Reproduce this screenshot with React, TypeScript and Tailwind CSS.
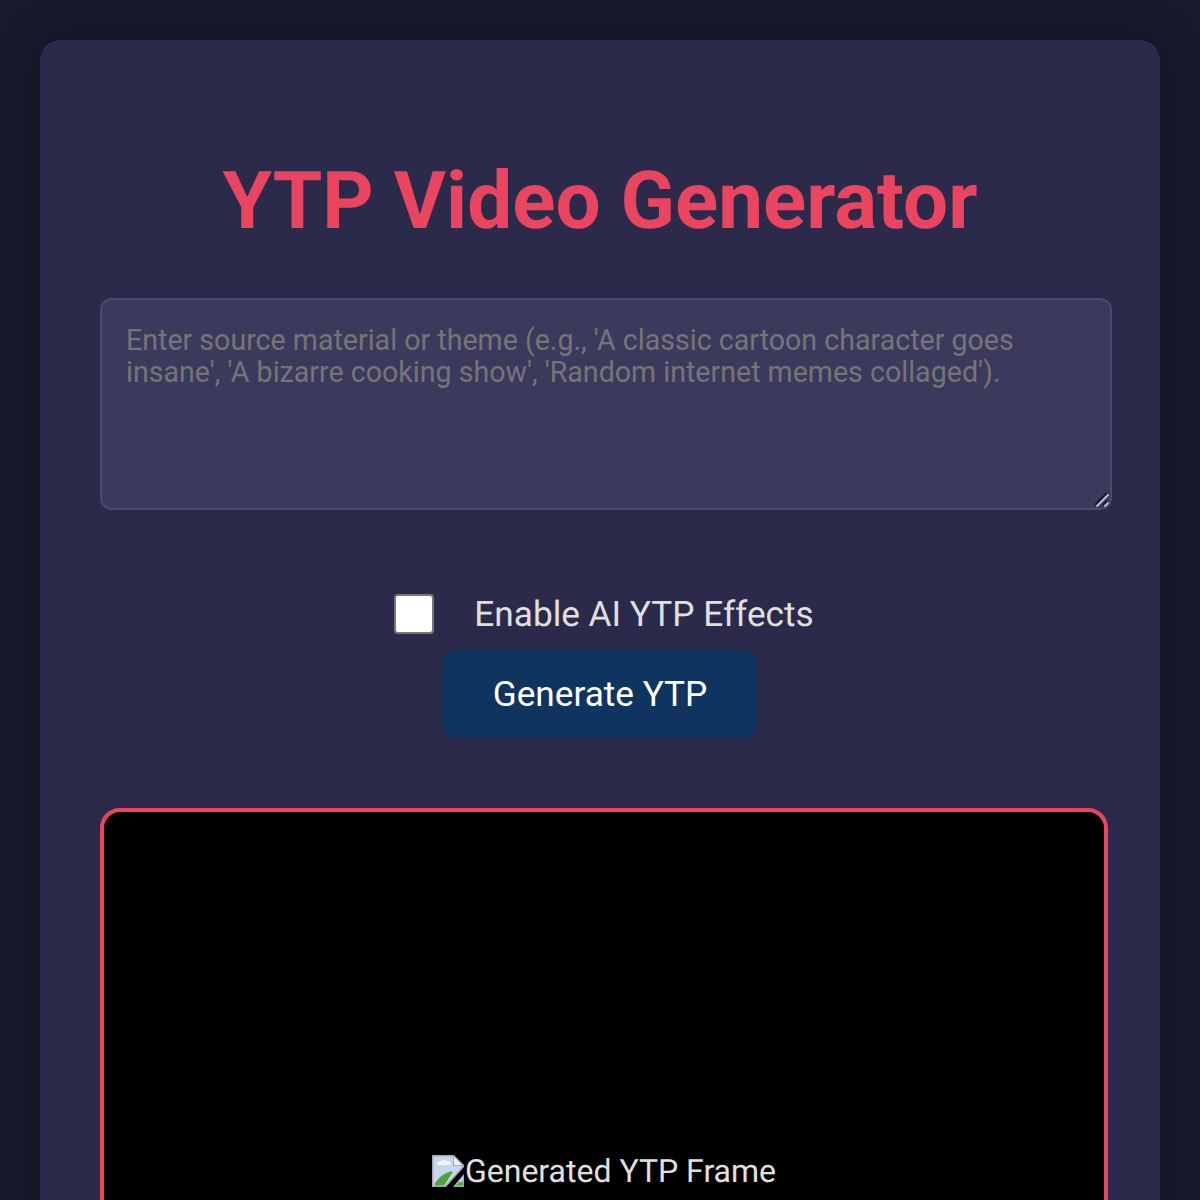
import React from 'react';

// Stand-in for the browser's broken image glyph
const BrokenImageIcon = () => (
    <svg width="33" height="32" viewBox="0 0 33 32" className="shrink-0">
        <path d="M0 0H22L32 10V12L14 32H0Z" fill="#a9a9a9" />
        <path d="M1.5 1.5H21V11H30.5V11.5L13 30.5H1.5Z" fill="#c5d6f3" />
        <path d="M22 2L30 10H22Z" fill="#f1f1f1" />
        <path d="M5 9Q6 6 9 6Q12 3 15 6Q19 6 19 9Q19 10 17 10H6Q5 10 5 9Z" fill="#f4f6fb" />
        <path d="M3 30.5V28Q8 20 17 17Q19 16 21 17L12 30.5Z" fill="#4fa636" />
        <path d="M32 19V32H21Z" fill="#a9a9a9" />
        <path d="M31 21V30.5H23Z" fill="#bccfe9" />
        <path d="M25 29Q28 26 31 27V30.5H23Z" fill="#54a83c" />
    </svg>
);

// Textarea resize grip, drawn large like the reference
const ResizeGrip = () => (
    <svg width="16" height="16" viewBox="0 0 16 16" className="pointer-events-none absolute right-[1px] bottom-[1px]">
        <path d="M0 12L12 0" stroke="#15152a" strokeWidth="2" />
        <path d="M8 12L12 8" stroke="#15152a" strokeWidth="2" />
        <path d="M1.5 13.5L13.5 1.5" stroke="#c0c0d0" strokeWidth="2" />
        <path d="M9.5 13.5L13.5 9.5" stroke="#c0c0d0" strokeWidth="2" />
    </svg>
);

export default function App() {
    return (
        <div className="h-[1200px] overflow-hidden bg-[#1a1a2e] p-10 font-['Roboto',sans-serif] [text-rendering:geometricPrecision]">
            <div className="rounded-[20px] bg-[#2b2a4a] px-[60px] pt-[60px] shadow-[0_0_40px_rgba(0,0,0,0.4)]">
                <h1 className="mt-[53px] mb-[49px] text-center text-[80px] leading-[96px] font-bold text-[#e94560]">
                    YTP Video Generator
                </h1>

                <div className="relative w-[1012px]">
                    <textarea
                        className="block h-[212px] w-full resize-none rounded-xl border-2 border-[#4a4a6a] bg-[#3c3a5c] px-6 py-6 text-[28.6px] leading-[32px] text-white placeholder:text-[#757575] outline-none"
                        placeholder="Enter source material or theme (e.g., 'A classic cartoon character goes insane', 'A bizarre cooking show', 'Random internet memes collaged')."
                    />
                    <ResizeGrip />
                </div>

                <div className="mt-[84px] flex items-center justify-center pl-[8px]">
                    <input
                        type="checkbox"
                        className="h-10 w-10 appearance-none rounded-[4px] border-2 border-[#767676] bg-white"
                    />
                    <label className="ml-[40px] text-[35.2px] leading-[40px] text-[#e0e0e0]">Enable AI YTP Effects</label>
                </div>

                <div className="mt-4 flex justify-center">
                    <button className="h-[88px] w-[316px] rounded-[16px] bg-[#0f3460] text-[35.2px] text-white">
                        Generate YTP
                    </button>
                </div>

                <div className="mt-[70px] flex h-[726px] w-[1008px] items-center justify-center rounded-[20px] border-4 border-[#e94560] bg-black">
                    <div className="flex items-center text-[32px] leading-[38px] text-[#e0e0e0]">
                        <BrokenImageIcon />
                        <span>Generated YTP Frame</span>
                    </div>
                </div>
            </div>
        </div>
    );
}
